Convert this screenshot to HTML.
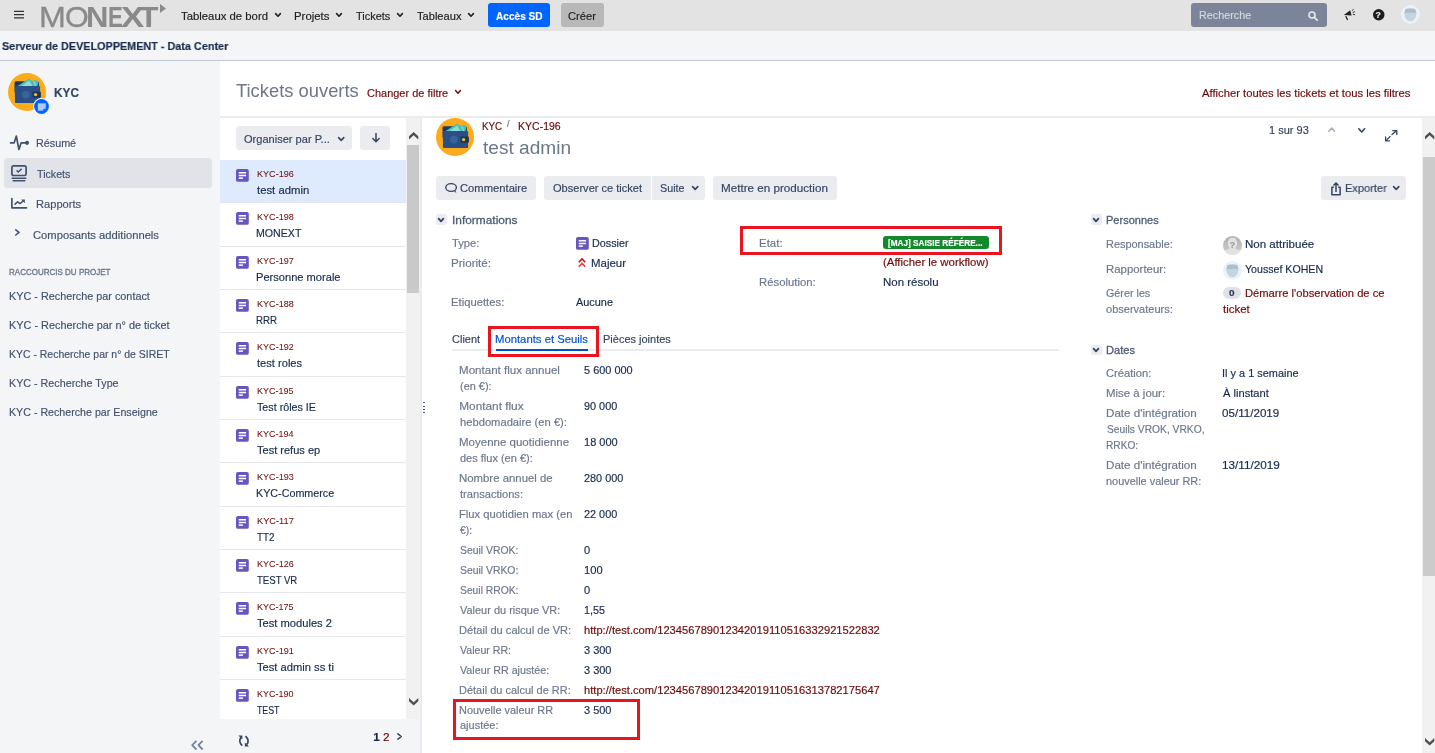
<!DOCTYPE html>
<html lang="fr"><head><meta charset="utf-8"><title>KYC-196 test admin</title>
<style>
*{box-sizing:border-box;margin:0;padding:0}
html,body{width:1435px;height:753px;overflow:hidden;background:#fff}
body{font-family:"Liberation Sans",sans-serif;font-size:11.8px;color:#172b4d;position:relative}
.a{position:absolute;white-space:nowrap;line-height:16px;transform-origin:0 50%;-webkit-text-stroke:0.18px}
.b{position:absolute}
svg{position:absolute;overflow:visible}
#pg{position:absolute;left:0;top:0;width:1435px;height:753px;overflow:hidden;will-change:transform}
</style></head><body><div id="pg">
<div class="b" style="left:0px;top:0px;width:1435px;height:31px;background:#e3e3e3;"></div>
<div class="b" style="left:0px;top:31px;width:1435px;height:30px;background:#f4f5f7;border-bottom:1px solid #c1c7d0;"></div>
<div class="b" style="left:0px;top:61px;width:220px;height:692px;background:#f4f5f7;"></div>
<div class="b" style="left:220px;top:116px;width:1215px;height:2px;background:#ebecf0;"></div>
<svg style="left:13.5px;top:9.9px" width="10" height="10" viewBox="0 0 10 10"><path d="M0 1.4h10M0 4.6h10M0 7.9h10" stroke="#333" stroke-width="1.4" fill="none"/></svg>
<div class="a" style="left:38.7px;top:1.8px;font-size:29.3px;line-height:29.3px;color:#8a8a8a;-webkit-text-stroke:0;"><span style="display:inline-block;width:25.9px;font-weight:400;transform:scaleX(1.1);transform-origin:0 0;-webkit-text-stroke:0.3px #8a8a8a;">M</span><span style="display:inline-block;width:21.2px;font-weight:400;transform:scaleX(1.04);transform-origin:0 0;-webkit-text-stroke:0.3px #8a8a8a;">O</span><span style="display:inline-block;width:22.5px;font-weight:700;transform:scaleX(1.06);transform-origin:0 0;-webkit-text-stroke:0px #8a8a8a;">N</span><span style="display:inline-block;width:12.7px;font-weight:700;transform:scaleX(0.76);transform-origin:0 0;-webkit-text-stroke:0px #8a8a8a;">E</span><span style="display:inline-block;width:18.2px;font-weight:700;transform:scaleX(1.19);transform-origin:0 0;-webkit-text-stroke:0px #8a8a8a;">X</span><span style="display:inline-block;width:20.0px;font-weight:700;transform:scaleX(1.09);transform-origin:0 0;-webkit-text-stroke:0px #8a8a8a;">T</span></div>
<svg style="left:160px;top:3.6px" width="6" height="9" viewBox="0 0 6 9"><path d="M0 0L6 4.5L0 9z" fill="#8a8a8a"/></svg>
<svg style="left:274.9px;top:12.6px" width="6" height="4" viewBox="0 0 6 4"><path d="M0.6 0.6L3.0 3.2L5.4 0.6" stroke="#222" stroke-width="1.6" fill="none" stroke-linecap="round" stroke-linejoin="round"/></svg>
<svg style="left:335.5px;top:12.6px" width="6" height="4" viewBox="0 0 6 4"><path d="M0.6 0.6L3.0 3.2L5.4 0.6" stroke="#222" stroke-width="1.6" fill="none" stroke-linecap="round" stroke-linejoin="round"/></svg>
<svg style="left:396.5px;top:12.6px" width="6" height="4" viewBox="0 0 6 4"><path d="M0.6 0.6L3.0 3.2L5.4 0.6" stroke="#222" stroke-width="1.6" fill="none" stroke-linecap="round" stroke-linejoin="round"/></svg>
<svg style="left:467.7px;top:12.6px" width="6" height="4" viewBox="0 0 6 4"><path d="M0.6 0.6L3.0 3.2L5.4 0.6" stroke="#222" stroke-width="1.6" fill="none" stroke-linecap="round" stroke-linejoin="round"/></svg>
<div class="b" style="left:488px;top:3px;width:62px;height:24px;background:#0065ff;border-radius:3px;"></div>
<div class="b" style="left:560.5px;top:3px;width:43.5px;height:24px;background:#b8b8b8;border-radius:3px;"></div>
<div class="b" style="left:1191px;top:3px;width:136px;height:24px;background:#7b8499;border-radius:3px;"></div>
<svg style="left:1308px;top:11px" width="10" height="10" viewBox="0 0 10 10"><circle cx="4" cy="4" r="3" stroke="#e6e8ec" stroke-width="1.6" fill="none"/><path d="M6.3 6.3L9.2 9.2" stroke="#e6e8ec" stroke-width="1.8" stroke-linecap="round"/></svg>
<svg style="left:1343px;top:8px" width="14" height="13" viewBox="0 0 14 13"><path d="M0.9 7L7.2 2.3L8.6 7.4z" fill="#222"/><path d="M3 8.6L4.4 11.6" stroke="#222" stroke-width="1.3" stroke-linecap="round"/><path d="M8.9 2.7L10.6 1.3M9.6 4.5L11.9 3.7M9.9 6.3L12.1 6.7" stroke="#222" stroke-width="0.9"/></svg>
<svg style="left:1372.8px;top:8.9px" width="11.5" height="11.5" viewBox="0 0 12 12"><circle cx="6" cy="6" r="6" fill="#1c1c1c"/></svg>
<svg style="left:1401.1px;top:5.4px" width="18.8" height="18.8" viewBox="0 0 19 19"><circle cx="9.5" cy="9.5" r="9.5" fill="#e9f2fb"/><path d="M3.4 8.4L4.2 5Q5 3.6 9.5 3.6Q14 3.6 14.8 5L15.6 8.4L15.2 11Q13.6 16.4 9.5 16.4Q5.4 16.4 3.8 11z" fill="#c5d5e0"/><path d="M3.4 8.6L4.2 5Q5 3.6 9.5 3.6Q14 3.6 14.8 5L15.6 8.6L14.8 8L4.2 8z" fill="#aabfce"/></svg>
<svg style="left:8.1px;top:72.8px" width="38.0" height="38.0" viewBox="0 0 38 38"><circle cx="19" cy="19" r="19" fill="#fdab1a"/><rect x="6.5" y="8.2" width="24.4" height="12" rx="1.6" fill="#1a3a63"/><path d="M8.9 13.4L21.1 5.4L24.5 8L27.6 6.9L30.6 8.6L29.3 13.4z" fill="#4bc0b8"/><path d="M13 13.4L21.3 7.6L24.4 13.4z" fill="#8fded6"/><path d="M25.8 8.4L28 13.4" stroke="#a5e6df" stroke-width="0.9"/><rect x="6.9" y="13.1" width="25.2" height="17" rx="1.2" fill="#2a4f87"/><circle cx="17.8" cy="21.6" r="3.9" fill="#376398"/><rect x="24.5" y="18.4" width="8.4" height="6.4" rx="1.4" fill="#17365f"/><circle cx="27.6" cy="21.6" r="1.7" fill="#fdb81e"/></svg>
<svg style="left:33.2px;top:98.1px" width="17" height="17" viewBox="0 0 17 17"><circle cx="8.5" cy="8.5" r="8.5" fill="#f4f5f7"/><circle cx="8.5" cy="8.5" r="7.4" fill="#0065ff"/><path d="M4.9 5.2h7.8v5.4l-2.4 0l0 2.1H4.9z" fill="#9cc3ff"/><path d="M4.9 6.9h7.8M4.9 8.7h7.8M4.9 10.5h7.8" stroke="#cfe1ff" stroke-width="0.5"/></svg>
<svg style="left:10px;top:134px" width="20" height="18" viewBox="0 0 20 18"><path d="M0.5 8.8H4.2L6.3 2L8.9 15.5L11.2 8.8H15.5" stroke="#42526e" stroke-width="1.7" fill="none" stroke-linejoin="round" stroke-linecap="round"/><circle cx="17" cy="8.8" r="2.1" fill="#42526e"/></svg>
<div class="b" style="left:4px;top:158px;width:208px;height:30px;background:#e1e3e9;border-radius:3px;"></div>
<svg style="left:11px;top:165px" width="16" height="17" viewBox="0 0 16 17"><rect x="0.9" y="0.9" width="14.2" height="9.6" rx="1.6" stroke="#42526e" stroke-width="1.7" fill="none"/><path d="M5.6 5.4L7.3 7L10.6 3.9" stroke="#42526e" stroke-width="1.5" fill="none"/><path d="M1.2 13.2H14.8M2.2 15.8H13.8" stroke="#42526e" stroke-width="1.5" stroke-linecap="round"/></svg>
<svg style="left:11px;top:198px" width="16" height="11" viewBox="0 0 16 11"><path d="M0.9 0.5V9.8H15.5" stroke="#42526e" stroke-width="1.7" fill="none" stroke-linejoin="round" stroke-linecap="round"/><path d="M3.6 6.6L6.6 3.8L9 5.6L13 2.2" stroke="#42526e" stroke-width="1.5" fill="none" stroke-linejoin="round"/><path d="M10.2 1.6H13.8V5.2z" fill="#42526e"/></svg>
<svg style="left:15.3px;top:229.4px" width="5" height="7" viewBox="0 0 5 7"><path d="M0.8 0.8L4 3.4L0.8 6" stroke="#42526e" stroke-width="1.5" fill="none" stroke-linecap="round" stroke-linejoin="round"/></svg>
<svg style="left:190.6px;top:739.6px" width="13" height="11" viewBox="0 0 13 11"><path d="M5.4 0.9L1.2 5.2L5.4 9.5M11.6 0.9L7.4 5.2L11.6 9.5" stroke="#76839a" stroke-width="1.8" fill="none" stroke-linejoin="round"/></svg>
<svg style="left:455.2px;top:90px" width="6" height="4" viewBox="0 0 6 4"><path d="M0.6 0.6L3.0 3.2L5.4 0.6" stroke="#6e0a0a" stroke-width="1.5" fill="none" stroke-linecap="round" stroke-linejoin="round"/></svg>
<div class="b" style="left:236px;top:126px;width:116px;height:24px;background:#ebecf0;border-radius:3px;"></div>
<svg style="left:338.4px;top:136.6px" width="6.4" height="4.2" viewBox="0 0 6.4 4.2"><path d="M0.6 0.6L3.2 3.4000000000000004L5.800000000000001 0.6" stroke="#344563" stroke-width="1.6" fill="none" stroke-linecap="round" stroke-linejoin="round"/></svg>
<div class="b" style="left:360px;top:126px;width:30px;height:24px;background:#ebecf0;border-radius:3px;"></div>
<svg style="left:372px;top:133px" width="8" height="10" viewBox="0 0 8 10"><path d="M4 0.6V8.6M0.9 5.6L4 8.8L7.1 5.6" stroke="#344563" stroke-width="1.5" fill="none" stroke-linecap="round" stroke-linejoin="round"/></svg>
<div class="b" style="left:220px;top:160px;width:186px;height:42.6px;background:#deebff;"></div>
<svg style="left:236.1px;top:169.0px" width="12.8" height="12.8" viewBox="0 0 16 16"><rect width="16" height="16" rx="2.4" fill="#6556c0"/><path d="M3.4 4.6H12.6M3.4 8H12.6" stroke="#fff" stroke-width="1.9"/><path d="M3.4 11.4H8.6" stroke="#fff" stroke-width="1.9"/></svg>
<div class="b" style="left:220px;top:202.4px;width:186px;height:1px;background:#e4e6ea;"></div>
<svg style="left:236.1px;top:212.3px" width="12.8" height="12.8" viewBox="0 0 16 16"><rect width="16" height="16" rx="2.4" fill="#6556c0"/><path d="M3.4 4.6H12.6M3.4 8H12.6" stroke="#fff" stroke-width="1.9"/><path d="M3.4 11.4H8.6" stroke="#fff" stroke-width="1.9"/></svg>
<div class="b" style="left:220px;top:245.8px;width:186px;height:1px;background:#e4e6ea;"></div>
<svg style="left:236.1px;top:255.7px" width="12.8" height="12.8" viewBox="0 0 16 16"><rect width="16" height="16" rx="2.4" fill="#6556c0"/><path d="M3.4 4.6H12.6M3.4 8H12.6" stroke="#fff" stroke-width="1.9"/><path d="M3.4 11.4H8.6" stroke="#fff" stroke-width="1.9"/></svg>
<div class="b" style="left:220px;top:289.1px;width:186px;height:1px;background:#e4e6ea;"></div>
<svg style="left:236.1px;top:299.0px" width="12.8" height="12.8" viewBox="0 0 16 16"><rect width="16" height="16" rx="2.4" fill="#6556c0"/><path d="M3.4 4.6H12.6M3.4 8H12.6" stroke="#fff" stroke-width="1.9"/><path d="M3.4 11.4H8.6" stroke="#fff" stroke-width="1.9"/></svg>
<div class="b" style="left:220px;top:332.4px;width:186px;height:1px;background:#e4e6ea;"></div>
<svg style="left:236.1px;top:342.3px" width="12.8" height="12.8" viewBox="0 0 16 16"><rect width="16" height="16" rx="2.4" fill="#6556c0"/><path d="M3.4 4.6H12.6M3.4 8H12.6" stroke="#fff" stroke-width="1.9"/><path d="M3.4 11.4H8.6" stroke="#fff" stroke-width="1.9"/></svg>
<div class="b" style="left:220px;top:375.8px;width:186px;height:1px;background:#e4e6ea;"></div>
<svg style="left:236.1px;top:385.6px" width="12.8" height="12.8" viewBox="0 0 16 16"><rect width="16" height="16" rx="2.4" fill="#6556c0"/><path d="M3.4 4.6H12.6M3.4 8H12.6" stroke="#fff" stroke-width="1.9"/><path d="M3.4 11.4H8.6" stroke="#fff" stroke-width="1.9"/></svg>
<div class="b" style="left:220px;top:419.1px;width:186px;height:1px;background:#e4e6ea;"></div>
<svg style="left:236.1px;top:429.0px" width="12.8" height="12.8" viewBox="0 0 16 16"><rect width="16" height="16" rx="2.4" fill="#6556c0"/><path d="M3.4 4.6H12.6M3.4 8H12.6" stroke="#fff" stroke-width="1.9"/><path d="M3.4 11.4H8.6" stroke="#fff" stroke-width="1.9"/></svg>
<div class="b" style="left:220px;top:462.4px;width:186px;height:1px;background:#e4e6ea;"></div>
<svg style="left:236.1px;top:472.3px" width="12.8" height="12.8" viewBox="0 0 16 16"><rect width="16" height="16" rx="2.4" fill="#6556c0"/><path d="M3.4 4.6H12.6M3.4 8H12.6" stroke="#fff" stroke-width="1.9"/><path d="M3.4 11.4H8.6" stroke="#fff" stroke-width="1.9"/></svg>
<div class="b" style="left:220px;top:505.7px;width:186px;height:1px;background:#e4e6ea;"></div>
<svg style="left:236.1px;top:515.6px" width="12.8" height="12.8" viewBox="0 0 16 16"><rect width="16" height="16" rx="2.4" fill="#6556c0"/><path d="M3.4 4.6H12.6M3.4 8H12.6" stroke="#fff" stroke-width="1.9"/><path d="M3.4 11.4H8.6" stroke="#fff" stroke-width="1.9"/></svg>
<div class="b" style="left:220px;top:549.1px;width:186px;height:1px;background:#e4e6ea;"></div>
<svg style="left:236.1px;top:559.0px" width="12.8" height="12.8" viewBox="0 0 16 16"><rect width="16" height="16" rx="2.4" fill="#6556c0"/><path d="M3.4 4.6H12.6M3.4 8H12.6" stroke="#fff" stroke-width="1.9"/><path d="M3.4 11.4H8.6" stroke="#fff" stroke-width="1.9"/></svg>
<div class="b" style="left:220px;top:592.4px;width:186px;height:1px;background:#e4e6ea;"></div>
<svg style="left:236.1px;top:602.3px" width="12.8" height="12.8" viewBox="0 0 16 16"><rect width="16" height="16" rx="2.4" fill="#6556c0"/><path d="M3.4 4.6H12.6M3.4 8H12.6" stroke="#fff" stroke-width="1.9"/><path d="M3.4 11.4H8.6" stroke="#fff" stroke-width="1.9"/></svg>
<div class="b" style="left:220px;top:635.7px;width:186px;height:1px;background:#e4e6ea;"></div>
<svg style="left:236.1px;top:645.6px" width="12.8" height="12.8" viewBox="0 0 16 16"><rect width="16" height="16" rx="2.4" fill="#6556c0"/><path d="M3.4 4.6H12.6M3.4 8H12.6" stroke="#fff" stroke-width="1.9"/><path d="M3.4 11.4H8.6" stroke="#fff" stroke-width="1.9"/></svg>
<div class="b" style="left:220px;top:679.1px;width:186px;height:1px;background:#e4e6ea;"></div>
<svg style="left:236.1px;top:689.0px" width="12.8" height="12.8" viewBox="0 0 16 16"><rect width="16" height="16" rx="2.4" fill="#6556c0"/><path d="M3.4 4.6H12.6M3.4 8H12.6" stroke="#fff" stroke-width="1.9"/><path d="M3.4 11.4H8.6" stroke="#fff" stroke-width="1.9"/></svg>
<div class="b" style="left:220px;top:719.3px;width:202px;height:33.7px;background:#f4f5f7;"></div>
<div class="b" style="left:406px;top:118px;width:14px;height:601.3px;background:#f1f1f1;"></div>
<div class="b" style="left:420px;top:118px;width:2px;height:635px;background:#e9ebef;"></div>
<div class="b" style="left:407.1px;top:145px;width:11.8px;height:147.6px;background:#c9c9c9;"></div>
<svg style="left:408.8px;top:131.6px" width="9.3" height="7.6" viewBox="0 0 9.3 7.6"><path d="M4.65 0L9.3 4.3V7.6L4.65 3.3L0 7.6V4.3z" fill="#505050"/></svg>
<svg style="left:408.8px;top:697.6px" width="9.3" height="7.6" viewBox="0 0 9.3 7.6"><path d="M4.65 7.6L9.3 3.3V0L4.65 4.3L0 0V3.3z" fill="#505050"/></svg>
<div class="b" style="left:423px;top:402.4px;width:2px;height:1px;background:#42526e;"></div>
<div class="b" style="left:423px;top:405.6px;width:2px;height:1px;background:#42526e;"></div>
<div class="b" style="left:423px;top:408.8px;width:2px;height:1px;background:#42526e;"></div>
<div class="b" style="left:423px;top:412px;width:2px;height:1px;background:#42526e;"></div>
<svg style="left:237.5px;top:735.4px" width="12" height="12" viewBox="0 0 12 12"><path d="M4.2 10.6Q-0.2 6.4 3.2 2.4" stroke="#344563" stroke-width="1.7" fill="none"/><path d="M7.6 1.2Q12 5.6 8.8 9.4" stroke="#344563" stroke-width="1.7" fill="none"/><path d="M0.4 0.4H4.4V4.4z" fill="#344563"/><path d="M6.8 7.4V11.4H11z" fill="#344563"/></svg>
<svg style="left:397.3px;top:733.3px" width="5.4" height="7" viewBox="0 0 5.4 7"><path d="M0.9 0.8L4.3 3.5L0.9 6.2" stroke="#344563" stroke-width="1.5" fill="none" stroke-linecap="round" stroke-linejoin="round"/></svg>
<svg style="left:436.1px;top:117.6px" width="38.0" height="38.0" viewBox="0 0 38 38"><circle cx="19" cy="19" r="19" fill="#fdab1a"/><rect x="6.5" y="8.2" width="24.4" height="12" rx="1.6" fill="#1a3a63"/><path d="M8.9 13.4L21.1 5.4L24.5 8L27.6 6.9L30.6 8.6L29.3 13.4z" fill="#4bc0b8"/><path d="M13 13.4L21.3 7.6L24.4 13.4z" fill="#8fded6"/><path d="M25.8 8.4L28 13.4" stroke="#a5e6df" stroke-width="0.9"/><rect x="6.9" y="13.1" width="25.2" height="17" rx="1.2" fill="#2a4f87"/><circle cx="17.8" cy="21.6" r="3.9" fill="#376398"/><rect x="24.5" y="18.4" width="8.4" height="6.4" rx="1.4" fill="#17365f"/><circle cx="27.6" cy="21.6" r="1.7" fill="#fdb81e"/></svg>
<svg style="left:1327.5px;top:127px" width="7.4" height="5" viewBox="0 0 7.4 5"><path d="M0.8 4.2L3.7 1L6.6 4.2" stroke="#a5adba" stroke-width="1.4" fill="none" stroke-linecap="round" stroke-linejoin="round"/></svg>
<svg style="left:1357.5px;top:128px" width="7.4" height="5" viewBox="0 0 7.4 5"><path d="M0.8 0.8L3.7 4L6.6 0.8" stroke="#344563" stroke-width="1.6" fill="none" stroke-linecap="round" stroke-linejoin="round"/></svg>
<svg style="left:1385px;top:129.5px" width="12.4" height="11.4" viewBox="0 0 12.4 11.4"><path d="M7 4.6L11.2 1M1.2 10.4L5.2 6.6" stroke="#344563" stroke-width="1.3" fill="none" stroke-linecap="round"/><path d="M7.8 0.6H11.8V4.4M0.6 7V10.8H4.6" stroke="#344563" stroke-width="1.3" fill="none" stroke-linejoin="round" stroke-linecap="round"/></svg>
<div class="b" style="left:436px;top:176px;width:100px;height:24px;background:#ebecf0;border-radius:3px;"></div>
<svg style="left:445px;top:183px" width="13" height="12" viewBox="0 0 13 12"><ellipse cx="6.1" cy="4.5" rx="5.3" ry="3.9" stroke="#344563" stroke-width="1.4" fill="none"/><path d="M8.4 7.6L11.4 10.2L10.2 7" fill="#344563"/></svg>
<div class="b" style="left:544.2px;top:176px;width:106.5px;height:24px;background:#ebecf0;border-radius:3px 0 0 3px;"></div>
<div class="b" style="left:652.2px;top:176px;width:52.6px;height:24px;background:#ebecf0;border-radius:0 3px 3px 0;"></div>
<svg style="left:691.6px;top:186px" width="6.4" height="4.2" viewBox="0 0 6.4 4.2"><path d="M0.6 0.6L3.2 3.4000000000000004L5.800000000000001 0.6" stroke="#344563" stroke-width="1.6" fill="none" stroke-linecap="round" stroke-linejoin="round"/></svg>
<div class="b" style="left:713.1px;top:176px;width:123.6px;height:24px;background:#ebecf0;border-radius:3px;"></div>
<div class="b" style="left:1321px;top:176px;width:85px;height:24px;background:#ebecf0;border-radius:3px;"></div>
<svg style="left:1331px;top:181.6px" width="10" height="14" viewBox="0 0 10 14"><path d="M2.8 5.2H0.9V12.7H9.1V5.2H7.2" stroke="#344563" stroke-width="1.5" fill="none" stroke-linejoin="round"/><path d="M5 10V1.4M2.5 3.6L5 0.9L7.5 3.6" stroke="#344563" stroke-width="1.5" fill="none" stroke-linejoin="round"/></svg>
<svg style="left:1392.6px;top:186px" width="6.4" height="4.2" viewBox="0 0 6.4 4.2"><path d="M0.6 0.6L3.2 3.4000000000000004L5.800000000000001 0.6" stroke="#344563" stroke-width="1.6" fill="none" stroke-linecap="round" stroke-linejoin="round"/></svg>
<div class="b" style="left:436px;top:214.4px;width:10.5px;height:10.5px;background:#ebecf0;border-radius:2px;"></div>
<svg style="left:438.3px;top:217.8px" width="6" height="4.2" viewBox="0 0 6 4.2"><path d="M0.6 0.6L3.0 3.4000000000000004L5.4 0.6" stroke="#344563" stroke-width="1.8" fill="none" stroke-linecap="round" stroke-linejoin="round"/></svg>
<svg style="left:576.0px;top:237.1px" width="12.8" height="12.8" viewBox="0 0 16 16"><rect width="16" height="16" rx="2.4" fill="#6556c0"/><path d="M3.4 4.6H12.6M3.4 8H12.6" stroke="#fff" stroke-width="1.9"/><path d="M3.4 11.4H8.6" stroke="#fff" stroke-width="1.9"/></svg>
<svg style="left:578.4px;top:257.6px" width="8" height="9.6" viewBox="0 0 8 9.6"><path d="M0.7 4.3L4 0.9L7.3 4.3" stroke="#cc1016" stroke-width="1.6" fill="none"/><path d="M0.7 8.8L4 5.4L7.3 8.8" stroke="#ea3c3c" stroke-width="1.6" fill="none"/></svg>
<div class="b" style="left:882.9px;top:235.9px;width:106.2px;height:13px;background:#14892c;border-radius:3px;"></div>
<div class="b" style="left:740px;top:226.3px;width:262.1px;height:28.7px;border:3px solid #e8141f;"></div>
<div class="b" style="left:452px;top:349px;width:607px;height:2px;background:#ebecf0;"></div>
<div class="b" style="left:496.3px;top:348.5px;width:91.5px;height:2.3px;background:#0052cc;"></div>
<div class="b" style="left:488.2px;top:326.3px;width:110.8px;height:30.4px;border:3px solid #e8141f;"></div>
<div class="b" style="left:453.3px;top:699.2px;width:186.5px;height:40.7px;border:3px solid #e8141f;"></div>
<div class="b" style="left:1091px;top:214.4px;width:10.5px;height:10.5px;background:#ebecf0;border-radius:2px;"></div>
<svg style="left:1093.3px;top:217.8px" width="6" height="4.2" viewBox="0 0 6 4.2"><path d="M0.6 0.6L3.0 3.4000000000000004L5.4 0.6" stroke="#344563" stroke-width="1.8" fill="none" stroke-linecap="round" stroke-linejoin="round"/></svg>
<svg style="left:1223px;top:235.9px" width="19" height="19" viewBox="0 0 19 19"><defs><clipPath id="c1"><circle cx="9.5" cy="9.5" r="9.5"/></clipPath><linearGradient id="g1" x1="0" y1="0" x2="0" y2="1"><stop offset="0" stop-color="#b0b0b0"/><stop offset="1" stop-color="#cfcfcf"/></linearGradient></defs><circle cx="9.5" cy="9.5" r="9.5" fill="url(#g1)"/><g clip-path="url(#c1)"><path d="M4.9 7.6Q4.9 1.4 9.5 1.4Q14.1 1.4 14.1 7.6Q14.1 10.6 12.6 11.8L12.8 13L19 14.8V19H0V14.8L6.2 13L6.4 11.8Q4.9 10.6 4.9 7.6z" fill="#e2e2e2"/></g></svg>
<svg style="left:1222.8px;top:260.7px" width="18.8" height="18.8" viewBox="0 0 19 19"><circle cx="9.5" cy="9.5" r="9.5" fill="#e9f2fb"/><path d="M3.4 8.4L4.2 5Q5 3.6 9.5 3.6Q14 3.6 14.8 5L15.6 8.4L15.2 11Q13.6 16.4 9.5 16.4Q5.4 16.4 3.8 11z" fill="#c5d5e0"/><path d="M3.4 8.6L4.2 5Q5 3.6 9.5 3.6Q14 3.6 14.8 5L15.6 8.6L14.8 8L4.2 8z" fill="#aabfce"/></svg>
<div class="b" style="left:1222.9px;top:286.7px;width:18.5px;height:12px;background:#dfe1e6;border-radius:6px;"></div>
<div class="b" style="left:1091px;top:344.5px;width:10.5px;height:10.5px;background:#ebecf0;border-radius:2px;"></div>
<svg style="left:1093.3px;top:347.9px" width="6" height="4.2" viewBox="0 0 6 4.2"><path d="M0.6 0.6L3.0 3.4000000000000004L5.4 0.6" stroke="#344563" stroke-width="1.8" fill="none" stroke-linecap="round" stroke-linejoin="round"/></svg>
<div class="b" style="left:1422.2px;top:118px;width:12.8px;height:635px;background:#f1f1f1;"></div>
<div class="b" style="left:1423.3px;top:157px;width:11.7px;height:418.6px;background:#cbcbcb;"></div>
<svg style="left:1424.7px;top:131.6px" width="9.3" height="7.6" viewBox="0 0 9.3 7.6"><path d="M4.65 0L9.3 4.3V7.6L4.65 3.3L0 7.6V4.3z" fill="#505050"/></svg>
<svg style="left:1424.7px;top:737.6px" width="9.3" height="7.6" viewBox="0 0 9.3 7.6"><path d="M4.65 7.6L9.3 3.3V0L4.65 4.3L0 0V3.3z" fill="#505050"/></svg>
<div class="a" style="left:180.8px;top:7.9px;color:#222;transform:scaleX(0.961);">Tableaux de bord</div>
<div class="a" style="left:294.0px;top:7.9px;color:#222;transform:scaleX(0.965);">Projets</div>
<div class="a" style="left:355.6px;top:7.9px;color:#222;transform:scaleX(0.927);">Tickets</div>
<div class="a" style="left:416.8px;top:7.9px;color:#222;transform:scaleX(0.941);">Tableaux</div>
<div class="a" style="left:495.8px;top:7.9px;font-weight:700;color:#fff;transform:scaleX(0.856);">Accès SD</div>
<div class="a" style="left:568.3px;top:7.9px;color:#222;transform:scaleX(0.946);">Créer</div>
<div class="a" style="left:1198.6px;top:6.8px;color:#d5d9e0;transform:scaleX(0.914);">Recherche</div>
<div class="a" style="left:1375.6px;top:7.0px;font-size:8.6px;font-weight:700;color:#eee;">?</div>
<div class="a" style="left:2.0px;top:37.9px;font-weight:700;transform:scaleX(0.918);">Serveur de DEVELOPPEMENT - Data Center</div>
<div class="a" style="left:53.8px;top:84.9px;font-size:13.6px;font-weight:700;color:#344563;transform:scaleX(0.873);">KYC</div>
<div class="a" style="left:35.9px;top:134.7px;color:#42526e;transform:scaleX(0.913);">Résumé</div>
<div class="a" style="left:37.0px;top:165.8px;color:#42526e;transform:scaleX(0.905);">Tickets</div>
<div class="a" style="left:36.3px;top:195.9px;color:#42526e;transform:scaleX(0.942);">Rapports</div>
<div class="a" style="left:33.2px;top:226.8px;color:#42526e;transform:scaleX(0.951);">Composants additionnels</div>
<div class="a" style="left:9.1px;top:264.3px;font-size:9.7px;color:#6b778c;transform:scaleX(0.827);-webkit-text-stroke:0.35px #6b778c;">RACCOURCIS DU PROJET</div>
<div class="a" style="left:8.8px;top:287.7px;color:#42526e;transform:scaleX(0.918);">KYC - Recherche par contact</div>
<div class="a" style="left:8.8px;top:316.8px;color:#42526e;transform:scaleX(0.923);">KYC - Recherche par n° de ticket</div>
<div class="a" style="left:8.8px;top:345.7px;color:#42526e;transform:scaleX(0.887);">KYC - Recherche par n° de SIRET</div>
<div class="a" style="left:8.8px;top:374.7px;color:#42526e;transform:scaleX(0.910);">KYC - Recherche Type</div>
<div class="a" style="left:8.8px;top:403.7px;color:#42526e;transform:scaleX(0.904);">KYC - Recherche par Enseigne</div>
<div class="a" style="left:235.8px;top:82.5px;font-size:18.6px;color:#6c7788;transform:scaleX(0.987);-webkit-text-stroke:0;">Tickets ouverts</div>
<div class="a" style="left:367.3px;top:84.8px;color:#6e0a0a;transform:scaleX(0.931);">Changer de filtre</div>
<div class="a" style="left:1202.0px;top:84.8px;color:#6e0a0a;transform:scaleX(0.953);">Afficher toutes les tickets et tous les filtres</div>
<div class="a" style="left:244.4px;top:130.6px;color:#344563;transform:scaleX(0.937);">Organiser par P...</div>
<div class="a" style="left:256.8px;top:166.1px;font-size:9.8px;color:#6e0a0a;transform:scaleX(0.925);-webkit-text-stroke:0.05px;">KYC-196</div>
<div class="a" style="left:256.8px;top:182.0px;transform:scaleX(0.959);">test admin</div>
<div class="a" style="left:256.8px;top:209.4px;font-size:9.8px;color:#6e0a0a;transform:scaleX(0.925);-webkit-text-stroke:0.05px;">KYC-198</div>
<div class="a" style="left:256.1px;top:225.3px;transform:scaleX(0.899);">MONEXT</div>
<div class="a" style="left:256.8px;top:252.8px;font-size:9.8px;color:#6e0a0a;transform:scaleX(0.925);-webkit-text-stroke:0.05px;">KYC-197</div>
<div class="a" style="left:256.1px;top:268.7px;transform:scaleX(0.941);">Personne morale</div>
<div class="a" style="left:256.8px;top:296.1px;font-size:9.8px;color:#6e0a0a;transform:scaleX(0.925);-webkit-text-stroke:0.05px;">KYC-188</div>
<div class="a" style="left:256.2px;top:312.0px;transform:scaleX(0.825);">RRR</div>
<div class="a" style="left:256.8px;top:339.4px;font-size:9.8px;color:#6e0a0a;transform:scaleX(0.925);-webkit-text-stroke:0.05px;">KYC-192</div>
<div class="a" style="left:256.8px;top:355.3px;transform:scaleX(0.942);">test roles</div>
<div class="a" style="left:256.8px;top:382.8px;font-size:9.8px;color:#6e0a0a;transform:scaleX(0.919);-webkit-text-stroke:0.05px;">KYC-195</div>
<div class="a" style="left:256.8px;top:398.7px;transform:scaleX(0.909);">Test rôles IE</div>
<div class="a" style="left:256.8px;top:426.1px;font-size:9.8px;color:#6e0a0a;transform:scaleX(0.919);-webkit-text-stroke:0.05px;">KYC-194</div>
<div class="a" style="left:256.8px;top:442.0px;transform:scaleX(0.935);">Test refus ep</div>
<div class="a" style="left:256.8px;top:469.4px;font-size:9.8px;color:#6e0a0a;transform:scaleX(0.925);-webkit-text-stroke:0.05px;">KYC-193</div>
<div class="a" style="left:256.1px;top:485.3px;transform:scaleX(0.911);">KYC-Commerce</div>
<div class="a" style="left:256.8px;top:512.7px;font-size:9.8px;color:#6e0a0a;transform:scaleX(0.943);-webkit-text-stroke:0.05px;">KYC-117</div>
<div class="a" style="left:256.8px;top:528.7px;transform:scaleX(0.830);">TT2</div>
<div class="a" style="left:256.8px;top:556.1px;font-size:9.8px;color:#6e0a0a;transform:scaleX(0.925);-webkit-text-stroke:0.05px;">KYC-126</div>
<div class="a" style="left:256.8px;top:572.0px;transform:scaleX(0.812);">TEST VR</div>
<div class="a" style="left:256.8px;top:599.4px;font-size:9.8px;color:#6e0a0a;transform:scaleX(0.919);-webkit-text-stroke:0.05px;">KYC-175</div>
<div class="a" style="left:256.8px;top:615.3px;transform:scaleX(0.945);">Test modules 2</div>
<div class="a" style="left:256.8px;top:642.7px;font-size:9.8px;color:#6e0a0a;transform:scaleX(0.925);-webkit-text-stroke:0.05px;">KYC-191</div>
<div class="a" style="left:256.8px;top:658.6px;transform:scaleX(0.946);">Test admin ss ti</div>
<div class="a" style="left:256.8px;top:686.1px;font-size:9.8px;color:#6e0a0a;transform:scaleX(0.919);-webkit-text-stroke:0.05px;">KYC-190</div>
<div class="a" style="left:256.8px;top:702.0px;transform:scaleX(0.743);">TEST</div>
<div class="a" style="left:373.2px;top:728.7px;font-weight:700;">1</div>
<div class="a" style="left:382.9px;top:728.7px;color:#6e0a0a;">2</div>
<div class="a" style="left:482.0px;top:117.9px;color:#6e0a0a;transform:scaleX(0.831);">KYC</div>
<div class="a" style="left:507.0px;top:116.4px;font-size:9px;color:#6b778c;">/</div>
<div class="a" style="left:517.7px;top:117.9px;color:#6e0a0a;transform:scaleX(0.892);">KYC-196</div>
<div class="a" style="left:482.5px;top:140.1px;font-size:18.4px;color:#6c7788;transform:scaleX(1.038);-webkit-text-stroke:0;">test admin</div>
<div class="a" style="left:1269.1px;top:122.3px;color:#344563;transform:scaleX(0.933);">1 sur 93</div>
<div class="a" style="left:460.4px;top:179.7px;color:#344563;transform:scaleX(0.951);">Commentaire</div>
<div class="a" style="left:552.6px;top:179.7px;color:#344563;transform:scaleX(0.937);">Observer ce ticket</div>
<div class="a" style="left:660.0px;top:179.7px;color:#344563;transform:scaleX(0.912);">Suite</div>
<div class="a" style="left:721.1px;top:179.7px;color:#344563;transform:scaleX(0.988);">Mettre en production</div>
<div class="a" style="left:1344.8px;top:179.7px;color:#344563;transform:scaleX(0.938);">Exporter</div>
<div class="a" style="left:451.9px;top:211.9px;color:#4c5b75;transform:scaleX(1.009);-webkit-text-stroke:0.3px #4c5b75;">Informations</div>
<div class="a" style="left:452.1px;top:234.5px;color:#6b778c;transform:scaleX(0.949);">Type:</div>
<div class="a" style="left:591.5px;top:234.5px;transform:scaleX(0.914);">Dossier</div>
<div class="a" style="left:451.3px;top:254.7px;color:#6b778c;transform:scaleX(0.984);">Priorité:</div>
<div class="a" style="left:591.2px;top:254.7px;transform:scaleX(0.969);">Majeur</div>
<div class="a" style="left:451.3px;top:293.8px;color:#6b778c;transform:scaleX(0.956);">Etiquettes:</div>
<div class="a" style="left:576.4px;top:293.8px;transform:scaleX(0.924);">Aucune</div>
<div class="a" style="left:758.5px;top:234.6px;color:#6b778c;transform:scaleX(0.971);">Etat:</div>
<div class="a" style="left:888.1px;top:234.9px;font-size:9.6px;font-weight:700;color:#fff;transform:scaleX(0.856);">[MAJ] SAISIE RÉFÉRE...</div>
<div class="a" style="left:882.8px;top:253.7px;color:#6e0a0a;transform:scaleX(0.965);">(Afficher le workflow)</div>
<div class="a" style="left:758.5px;top:273.5px;color:#6b778c;transform:scaleX(0.961);">Résolution:</div>
<div class="a" style="left:882.5px;top:273.5px;transform:scaleX(0.974);">Non résolu</div>
<div class="a" style="left:451.8px;top:331.1px;color:#344563;transform:scaleX(0.932);">Client</div>
<div class="a" style="left:495.3px;top:331.1px;color:#0052cc;transform:scaleX(0.958);">Montants et Seuils</div>
<div class="a" style="left:602.8px;top:331.1px;color:#344563;transform:scaleX(0.932);">Pièces jointes</div>
<div class="a" style="left:459.3px;top:362.0px;color:#6b778c;transform:scaleX(0.980);">Montant flux annuel</div>
<div class="a" style="left:459.6px;top:378.0px;color:#6b778c;transform:scaleX(0.927);">(en €):</div>
<div class="a" style="left:583.9px;top:362.0px;transform:scaleX(0.928);">5 600 000</div>
<div class="a" style="left:459.3px;top:397.9px;color:#6b778c;">Montant flux</div>
<div class="a" style="left:459.6px;top:413.9px;color:#6b778c;transform:scaleX(0.948);">hebdomadaire (en €):</div>
<div class="a" style="left:583.9px;top:397.9px;transform:scaleX(0.922);">90 000</div>
<div class="a" style="left:459.3px;top:433.8px;color:#6b778c;transform:scaleX(0.976);">Moyenne quotidienne</div>
<div class="a" style="left:459.8px;top:449.8px;color:#6b778c;transform:scaleX(0.932);">des flux (en €):</div>
<div class="a" style="left:583.5px;top:433.8px;transform:scaleX(0.935);">18 000</div>
<div class="a" style="left:459.3px;top:469.7px;color:#6b778c;transform:scaleX(0.965);">Nombre annuel de</div>
<div class="a" style="left:460.1px;top:485.7px;color:#6b778c;transform:scaleX(0.942);">transactions:</div>
<div class="a" style="left:583.9px;top:469.7px;transform:scaleX(0.922);">280 000</div>
<div class="a" style="left:459.3px;top:505.6px;color:#6b778c;transform:scaleX(0.951);">Flux quotidien max (en</div>
<div class="a" style="left:460.1px;top:521.6px;color:#6b778c;transform:scaleX(0.888);">€):</div>
<div class="a" style="left:583.9px;top:505.6px;transform:scaleX(0.922);">22 000</div>
<div class="a" style="left:459.9px;top:541.5px;color:#6b778c;transform:scaleX(0.880);">Seuil VROK:</div>
<div class="a" style="left:583.9px;top:541.5px;transform:scaleX(0.939);">0</div>
<div class="a" style="left:459.9px;top:561.5px;color:#6b778c;transform:scaleX(0.880);">Seuil VRKO:</div>
<div class="a" style="left:583.5px;top:561.5px;transform:scaleX(0.948);">100</div>
<div class="a" style="left:459.9px;top:581.6px;color:#6b778c;transform:scaleX(0.874);">Seuil RROK:</div>
<div class="a" style="left:583.9px;top:581.6px;transform:scaleX(0.939);">0</div>
<div class="a" style="left:460.1px;top:601.8px;color:#6b778c;transform:scaleX(0.929);">Valeur du risque VR:</div>
<div class="a" style="left:583.5px;top:601.8px;transform:scaleX(0.912);">1,55</div>
<div class="a" style="left:459.4px;top:621.8px;color:#6b778c;transform:scaleX(0.940);">Détail du calcul de VR:</div>
<div class="a" style="left:583.7px;top:621.8px;color:#6e0a0a;transform:scaleX(0.946);">http://test.com/123456789012342019110516332921522832</div>
<div class="a" style="left:460.1px;top:641.7px;color:#6b778c;transform:scaleX(0.897);">Valeur RR:</div>
<div class="a" style="left:583.9px;top:641.7px;transform:scaleX(0.930);">3 300</div>
<div class="a" style="left:460.1px;top:661.6px;color:#6b778c;transform:scaleX(0.909);">Valeur RR ajustée:</div>
<div class="a" style="left:583.9px;top:661.6px;transform:scaleX(0.930);">3 300</div>
<div class="a" style="left:459.4px;top:681.5px;color:#6b778c;transform:scaleX(0.931);">Détail du calcul de RR:</div>
<div class="a" style="left:583.7px;top:681.5px;color:#6e0a0a;transform:scaleX(0.946);">http://test.com/123456789012342019110516313782175647</div>
<div class="a" style="left:459.4px;top:701.5px;color:#6b778c;transform:scaleX(0.926);">Nouvelle valeur RR</div>
<div class="a" style="left:459.8px;top:717.4px;color:#6b778c;transform:scaleX(0.931);">ajustée:</div>
<div class="a" style="left:583.9px;top:701.5px;transform:scaleX(0.930);">3 500</div>
<div class="a" style="left:1106.0px;top:211.9px;color:#4c5b75;transform:scaleX(0.935);-webkit-text-stroke:0.3px #4c5b75;">Personnes</div>
<div class="a" style="left:1106.0px;top:235.7px;color:#6b778c;transform:scaleX(0.926);">Responsable:</div>
<div class="a" style="left:1229.7px;top:237.2px;font-size:8.6px;font-weight:700;color:#9a9a9a;">?</div>
<div class="a" style="left:1244.8px;top:235.7px;transform:scaleX(0.978);">Non attribuée</div>
<div class="a" style="left:1105.9px;top:260.6px;color:#6b778c;transform:scaleX(0.966);">Rapporteur:</div>
<div class="a" style="left:1245.4px;top:260.6px;transform:scaleX(0.900);">Youssef KOHEN</div>
<div class="a" style="left:1106.4px;top:284.6px;color:#6b778c;transform:scaleX(0.912);">Gérer les</div>
<div class="a" style="left:1106.4px;top:300.5px;color:#6b778c;transform:scaleX(0.934);">observateurs:</div>
<div class="a" style="left:1229.4px;top:285.2px;font-size:9.8px;font-weight:700;color:#2a3b59;transform:scaleX(1.022);">0</div>
<div class="a" style="left:1244.9px;top:284.6px;color:#6e0a0a;transform:scaleX(0.948);">Démarre l&#x27;observation de ce</div>
<div class="a" style="left:1222.7px;top:300.5px;color:#6e0a0a;transform:scaleX(0.972);">ticket</div>
<div class="a" style="left:1106.0px;top:341.8px;color:#4c5b75;transform:scaleX(0.946);-webkit-text-stroke:0.3px #4c5b75;">Dates</div>
<div class="a" style="left:1106.4px;top:364.8px;color:#6b778c;transform:scaleX(0.947);">Création:</div>
<div class="a" style="left:1222.0px;top:364.8px;transform:scaleX(0.927);">Il y a 1 semaine</div>
<div class="a" style="left:1105.9px;top:384.7px;color:#6b778c;transform:scaleX(0.969);">Mise à jour:</div>
<div class="a" style="left:1222.9px;top:384.7px;transform:scaleX(0.944);">À linstant</div>
<div class="a" style="left:1105.9px;top:404.9px;color:#6b778c;transform:scaleX(0.985);">Date d&#x27;intégration</div>
<div class="a" style="left:1222.4px;top:404.9px;transform:scaleX(0.985);">05/11/2019</div>
<div class="a" style="left:1106.5px;top:420.9px;color:#6b778c;transform:scaleX(0.870);">Seuils VROK, VRKO,</div>
<div class="a" style="left:1106.0px;top:436.7px;color:#6b778c;transform:scaleX(0.860);">RRKO:</div>
<div class="a" style="left:1105.9px;top:456.8px;color:#6b778c;transform:scaleX(0.985);">Date d&#x27;intégration</div>
<div class="a" style="left:1221.9px;top:456.8px;transform:scaleX(0.994);">13/11/2019</div>
<div class="a" style="left:1106.2px;top:472.6px;color:#6b778c;transform:scaleX(0.925);">nouvelle valeur RR:</div>
</div></body></html>
